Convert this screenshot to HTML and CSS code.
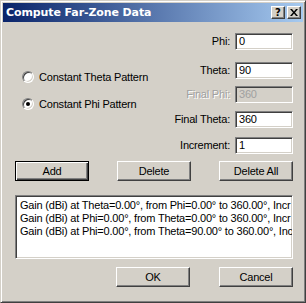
FILE: index.html
```html
<!DOCTYPE html>
<html lang="en">
<head>
  <meta charset="UTF-8" />
  <title>Compute Far-Zone Data</title>
  <link rel="stylesheet" href="styles.css">
</head>
<body>

  <div class="window">
    <!-- caption bar -->
    <div class="caption">
      <span class="caption-title">Compute Far-Zone Data</span>
      <div class="caption-btns">
        <button class="cap-btn" type="button" aria-label="Help">?</button>
        <button class="cap-btn cap-close" type="button" aria-label="Close">
          <svg width="8" height="7" viewBox="0 0 8 7" aria-hidden="true">
            <path d="M0 0h2l2 2.5L6 0h2L5 3.5 8 7H6L4 4.5 2 7H0l3-3.5z" fill="#000"/>
          </svg>
        </button>
      </div>
    </div>

    <div class="dialog-body">
      <div class="top-area">
        <div class="radio-group">
          <label class="radio">
            <span class="radio-dot"></span>
            Constant Theta Pattern
          </label>
          <label class="radio">
            <span class="radio-dot checked"></span>
            Constant Phi Pattern
          </label>
        </div>

        <div class="fields">
          <span class="field-label">Phi:</span>
          <span class="field-input">0</span>
          <span class="field-label">Theta:</span>
          <span class="field-input">90</span>
          <span class="field-label disabled">Final Phi:</span>
          <span class="field-input disabled">360</span>
          <span class="field-label">Final Theta:</span>
          <span class="field-input">360</span>
          <span class="field-label">Increment:</span>
          <span class="field-input">1</span>
        </div>
      </div>

      <div class="btn-row">
        <button class="btn btn-default" type="button">Add</button>
        <button class="btn" type="button">Delete</button>
        <button class="btn" type="button">Delete All</button>
      </div>

      <!-- rows are wider than the box; only the visible part is kept -->
      <div class="listbox">
        <div class="list-item">Gain (dBi) at Theta=0.00°, from Phi=0.00° to 360.00°, Incr</div>
        <div class="list-item">Gain (dBi) at Phi=0.00°, from Theta=0.00° to 360.00°, Incr</div>
        <div class="list-item">Gain (dBi) at Phi=0.00°, from Theta=90.00° to 360.00°, Inc</div>
      </div>

      <div class="btn-row btn-row-end">
        <button class="btn" type="button">OK</button>
        <button class="btn" type="button">Cancel</button>
      </div>
    </div>
  </div>

</body>
</html>
```

FILE: styles.css
```css
/* Reset */
* {
  margin: 0;
  padding: 0;
  box-sizing: border-box;
}

html, body {
  width: 306px;
  height: 303px;
  overflow: hidden;
  background: #d4d0c8;
  font-family: 'Liberation Sans', Arial, sans-serif;
  font-size: 11px;
  letter-spacing: -0.2px;
  color: #000;
}

/* Outer window frame */
.window {
  width: 306px;
  height: 303px;
  padding: 2px;
  background: #d4d0c8;
  border: 1px solid;
  border-color: #d4d0c8 #404040 #404040 #d4d0c8;
  box-shadow: inset 1px 1px #fff, inset -1px -1px #808080;
  display: flex;
  flex-direction: column;
}

/* Caption bar */
.caption {
  height: 19px;
  display: flex;
  align-items: center;
  justify-content: space-between;
  padding: 0 2px 0 3px;
  background: linear-gradient(to right, #0a246a, #a6caf0);
  color: #fff;
}

.caption-title {
  font-family: 'DejaVu Sans', Verdana, sans-serif;
  font-weight: bold;
  font-size: 11px;
  letter-spacing: -0.1px;
}

.caption-btns {
  display: flex;
  gap: 2px;
}

.cap-btn {
  width: 14px;
  height: 13px;
  display: flex;
  align-items: center;
  justify-content: center;
  background: #d4d0c8;
  border: 1px solid;
  border-color: #fff #404040 #404040 #fff;
  box-shadow: inset -1px -1px #808080;
  font-family: 'DejaVu Sans', Verdana, sans-serif;
  font-weight: bold;
  font-size: 10px;
  line-height: 1;
  color: #000;
}

/* Dialog content */
.dialog-body {
  flex: 1;
  padding: 0 10px 0 12px;
  display: flex;
  flex-direction: column;
}

.top-area {
  display: flex;
  margin-top: 11px;
}

.radio-group {
  flex: 1;
  display: flex;
  flex-direction: column;
  gap: 13px;
  padding: 37px 0 0 7px;
}

.radio {
  display: flex;
  align-items: center;
  gap: 5px;
  height: 14px;
}

.radio-dot {
  width: 12px;
  height: 12px;
  border-radius: 50%;
  background: #fff;
  border: 1px solid;
  border-color: #808080 #fff #fff #808080;
  box-shadow: inset 1px 1px #404040, inset -1px -1px #d4d0c8;
  position: relative;
}

.radio-dot.checked::after {
  content: "";
  position: absolute;
  left: 3px;
  top: 3px;
  width: 4px;
  height: 4px;
  border-radius: 50%;
  background: #000;
}

/* Label + edit box grid */
.fields {
  display: grid;
  grid-template-columns: auto 58px;
  grid-template-rows: 29px 24px 25px 26px 17px;
  column-gap: 5px;
  align-items: start;
}

.field-label {
  text-align: right;
  line-height: 17px;
}

.field-label.disabled {
  color: #a0a0a0;
  text-shadow: 1px 1px #fff;
}

.field-input {
  height: 17px;
  padding-left: 3px;
  line-height: 13px;
  background: #fff;
  border: 1px solid;
  border-color: #808080 #fff #fff #808080;
  box-shadow: inset 1px 1px #404040, inset -1px -1px #d4d0c8;
  padding-top: 1px;
}

.field-input.disabled {
  background: #d4d0c8;
  color: #a0a0a0;
}

/* Push buttons */
.btn-row {
  display: flex;
  justify-content: space-between;
  margin-top: 7px;
}

.btn-row-end {
  justify-content: flex-end;
  gap: 29px;
  margin-top: 8px;
}

.btn {
  width: 74px;
  height: 20px;
  background: #d4d0c8;
  border: 1px solid;
  border-color: #fff #404040 #404040 #fff;
  box-shadow: inset -1px -1px #808080;
  font-family: 'Liberation Sans', Arial, sans-serif;
  font-size: 11px;
  letter-spacing: -0.2px;
  color: #000;
}

.btn-default {
  border-color: #000;
  box-shadow: inset 1px 1px #fff, inset -1px -1px #404040, inset -2px -2px #808080;
}

/* List box */
.listbox {
  margin-top: 14px;
  height: 64px;
  padding: 3px 0 0 4px;
  background: #fff;
  border: 1px solid;
  border-color: #808080 #fff #fff #808080;
  box-shadow: inset 1px 1px #404040, inset -1px -1px #d4d0c8;
  overflow: hidden;
}

.list-item {
  white-space: nowrap;
  line-height: 13px;
}
```
